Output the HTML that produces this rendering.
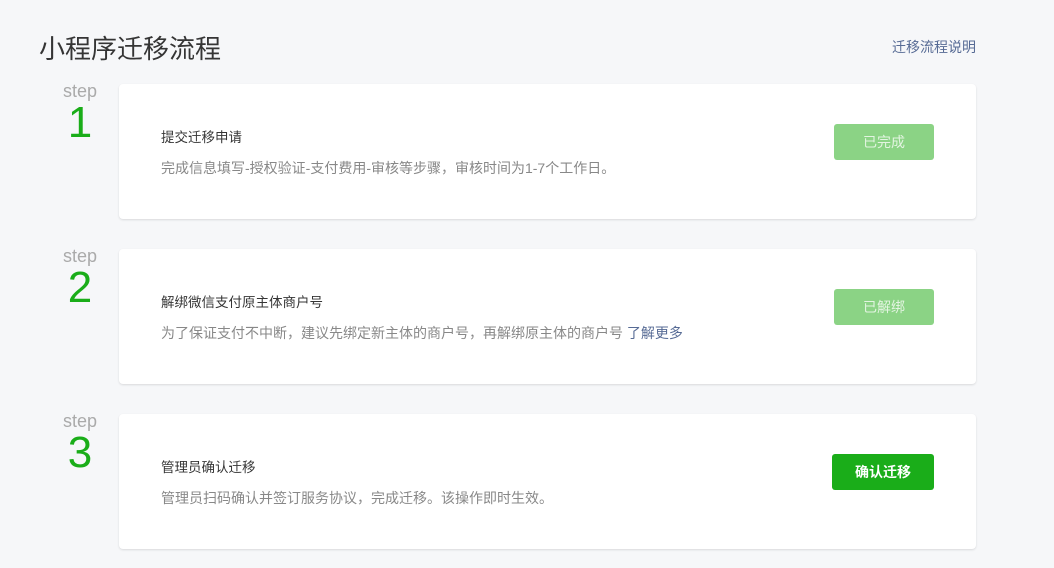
<!DOCTYPE html>
<html><head><meta charset="utf-8"><style>
*{margin:0;padding:0;box-sizing:border-box}
body{width:1054px;height:568px;background:#f6f7f9;font-family:"Liberation Sans","Noto Sans CJK SC",sans-serif;position:relative;overflow:hidden}
.t{position:absolute;left:39px;top:29px;font-size:26px;color:#353535}
.lk{position:absolute;left:892px;top:37px;font-size:14px;color:#576b95}
.step{position:absolute;left:40px;width:80px;text-align:center;color:#aaa;font-size:18px;line-height:18px}
.num{position:absolute;left:40px;width:80px;text-align:center;color:#1aad19;font-size:44px;line-height:44px}
.card{position:absolute;left:119px;width:857px;height:135px;background:#fff;border-radius:4px;box-shadow:0 1px 2px rgba(0,0,0,.12)}
.h{position:absolute;left:42px;top:42px;font-size:13.5px;color:#353535}
.d{position:absolute;left:42px;top:74px;font-size:14px;color:#888}
.d a{color:#576b95}
.b{position:absolute;left:715px;top:40px;width:100px;height:36px;border-radius:3px;background:#8bd385;color:#e3f4e1;font-size:14px;text-align:center;line-height:36px}
.b.g{left:713px;width:102px;background:#1aad19;color:#fff;font-weight:bold}
</style></head><body>
<div class="t">小程序迁移流程</div>
<div class="lk">迁移流程说明</div>

<div class="step" style="top:82px">step</div><div class="num" style="top:101px">1</div>
<div class="card" style="top:84px"><div class="h">提交迁移申请</div><div class="d">完成信息填写-授权验证-支付费用-审核等步骤，审核时间为1-7个工作日。</div><div class="b">已完成</div></div>

<div class="step" style="top:247px">step</div><div class="num" style="top:266px">2</div>
<div class="card" style="top:249px"><div class="h">解绑微信支付原主体商户号</div><div class="d">为了保证支付不中断，建议先绑定新主体的商户号，再解绑原主体的商户号 <a>了解更多</a></div><div class="b">已解绑</div></div>

<div class="step" style="top:412px">step</div><div class="num" style="top:431px">3</div>
<div class="card" style="top:414px"><div class="h">管理员确认迁移</div><div class="d">管理员扫码确认并签订服务协议，完成迁移。该操作即时生效。</div><div class="b g">确认迁移</div></div>
</body></html>
